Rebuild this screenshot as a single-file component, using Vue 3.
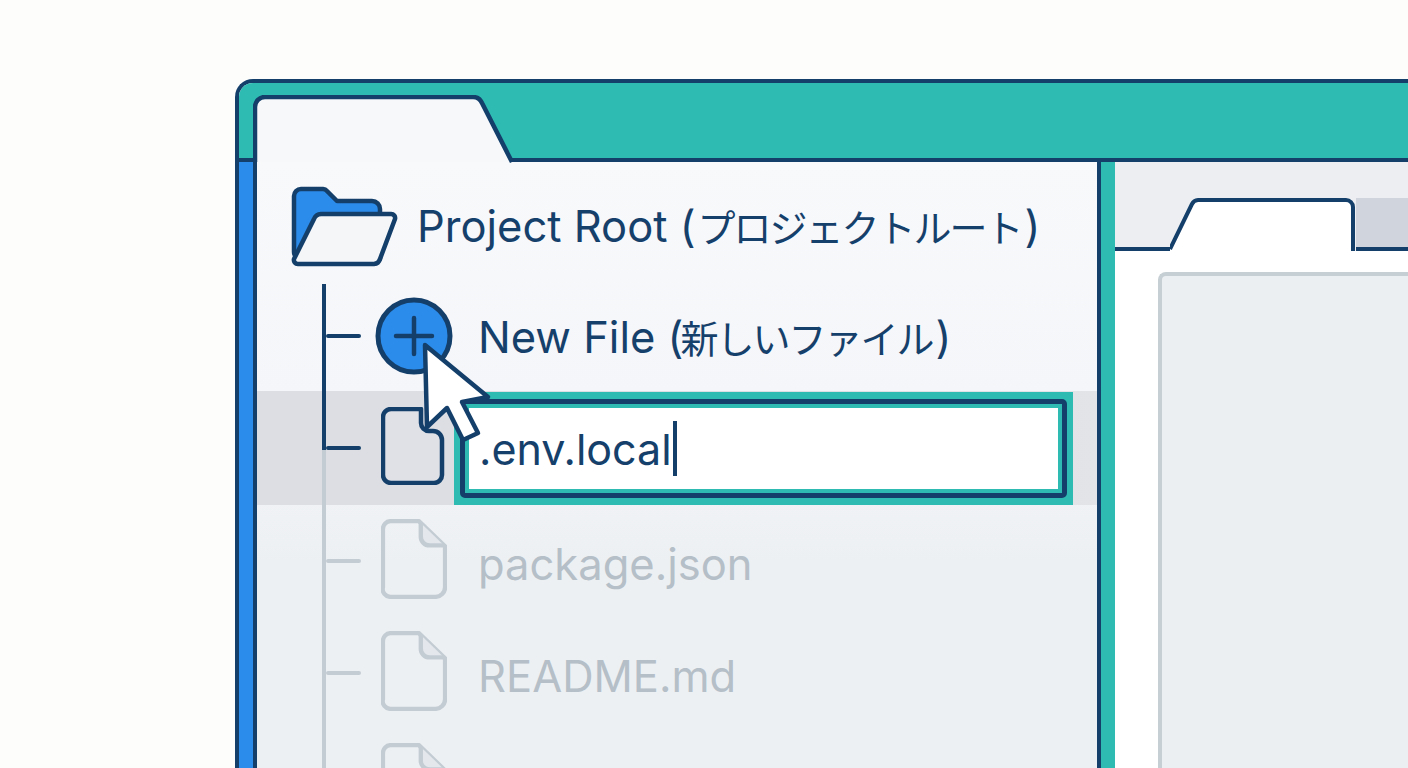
<template>
  <div class="page">
    <div class="window">
      <div class="titlebar">
        <svg class="folder-tab" viewBox="253 95 262 68" width="262" height="68">
          <path d="M255 162V107a10 10 0 0 1 10-10H473a10 10 0 0 1 9 6L512 162" fill="#f7f8fa" stroke="#143f6b" stroke-width="4.5" />
        </svg>
      </div>
      <div class="body">
        <div class="rail"></div>
        <aside class="explorer">
          <div class="root">
            <svg class="folder" viewBox="290 185 108 84" width="108" height="84">
              <path d="M294 196a7 7 0 0 1 7-7h22a6 6 0 0 1 4 2l10 10h35a8 8 0 0 1 8 8v50H301a7 7 0 0 1-7-7z" fill="#2b8ceb" stroke="#143f6b" stroke-width="4.5" stroke-linejoin="round" />
              <path d="M298 264a4 4 0 0 1-4-5l20-40a8 8 0 0 1 7-5h70a4 4 0 0 1 4 5l-15 40a7 7 0 0 1-6 5z" fill="#f4f6f8" stroke="#143f6b" stroke-width="4.5" stroke-linejoin="round" />
            </svg>
            <span class="label">Project Root (<span class="ja">プロジェクトルート</span>)</span>
          </div>
          <div class="row new-file">
            <span class="branch"></span>
            <svg class="plus" viewBox="0 0 80 80" width="80" height="80">
              <circle cx="40" cy="40" r="36" fill="#2b8ceb" stroke="#143f6b" stroke-width="5" />
              <path d="M40 22v36M22 40h36" stroke="#143f6b" stroke-width="4.5" stroke-linecap="round" />
            </svg>
            <span class="label">New File (<span class="ja">新しいファイル</span>)</span>
          </div>
          <div class="row editing">
            <span class="branch"></span>
            <svg class="file" viewBox="0 0 66 78" width="66" height="78">
              <path d="M10 2H40V16a8 8 0 0 0 8 8H52a9 9 0 0 1 9 9V68a8 8 0 0 1-8 8H10a8 8 0 0 1-8-8V10a8 8 0 0 1 8-8z" fill="#dfe1e6" stroke="#143f6b" stroke-width="4.5" stroke-linejoin="round" />
            </svg>
            <div class="input">
              <div class="input-inner">
                <span class="label">.env.local</span><span class="caret"></span>
              </div>
            </div>
          </div>
          <div v-for="name in dimFiles" :key="name" class="row dim">
            <span class="branch"></span>
            <svg class="file" viewBox="0 0 68 82" width="66" height="80">
              <path d="M10 2H39L66 28V70a10 10 0 0 1-10 10H10A8 8 0 0 1 2 70V10a8 8 0 0 1 8-8z" fill="none" stroke="#c3ccd3" stroke-width="4.5" stroke-linejoin="round" />
              <path d="M41 4V18a9 9 0 0 0 9 9H65" fill="#e4e8ec" stroke="#c3ccd3" stroke-width="4.5" />
            </svg>
            <span class="label">{{ name }}</span>
          </div>
        </aside>
        <div class="divider"></div>
        <main class="editor">
          <div class="tabs">
            <div class="tab-line"></div>
            <svg class="active-tab" viewBox="0 0 186 53" width="186" height="53">
              <path d="M0 53V51L22 6a7 7 0 0 1 6-4H176a7 7 0 0 1 7 7V53z" fill="#ffffff" />
              <path d="M0 51L22 6a7 7 0 0 1 6-4H176a7 7 0 0 1 7 7V53" fill="none" stroke="#143f6b" stroke-width="4" />
            </svg>
            <div class="other-tab"></div>
          </div>
          <div class="content">
            <div class="card"></div>
          </div>
        </main>
      </div>
    </div>
    <svg class="cursor" viewBox="0 0 80 110" width="80" height="110">
      <path d="M5 5L68 57L42 62L58 93L43 100L27 68L7 87z" fill="#ffffff" stroke="#143f6b" stroke-width="4.5" stroke-linejoin="round" />
    </svg>
  </div>
</template>

<script setup>
const dimFiles = ['package.json', 'README.md', '']
</script>

<style>
html,
body {
  margin: 0;
  overflow: hidden;
}
</style>

<style scoped>
.page {
  position: relative;
  box-sizing: border-box;
  height: 768px;
  padding: 79px 0 0 235px;
  overflow: hidden;
  background: #fdfdfc;
  font-family: Inter, 'Noto Sans CJK JP', sans-serif;
}
.window {
  box-sizing: border-box;
  width: 1300px;
  height: 800px;
  border: 4px solid #143f6b;
  border-right: 0;
  border-radius: 18px 0 0 0;
  overflow: hidden;
}
.titlebar {
  position: relative;
  box-sizing: border-box;
  height: 79px;
  background: #2dbbb2;
  border-bottom: 4px solid #143f6b;
}
.folder-tab {
  position: absolute;
  left: 14px;
  top: 12px;
}
.body {
  display: flex;
  height: 720px;
}
.rail {
  flex: none;
  width: 14px;
  background: #2b8ceb;
  border-right: 4px solid #143f6b;
}
.explorer {
  flex: none;
  width: 840px;
  background: linear-gradient(#f8f9fb 0, #f5f6f9 230px, #edf0f3 400px);
}
.divider {
  flex: none;
  width: 14px;
  background: #2dbbb2;
  border-left: 4px solid #143f6b;
}
.root {
  display: flex;
  align-items: center;
  height: 84px;
  padding: 23px 0 12px 33px;
}
.root .label {
  margin: -2px 0 0 19px;
}
.label {
  font-size: 43.5px;
  line-height: 1.2;
  color: #15406b;
  white-space: nowrap;
}
.ja {
  margin: 0 3px 0 2px;
  font-size: 38px;
  letter-spacing: -2px;
}
.row {
  display: flex;
  align-items: center;
  height: 112px;
  padding-left: 65px;
}
.branch {
  position: relative;
  flex: none;
  align-self: stretch;
  width: 54px;
  border-left: 4px solid #143f6b;
}
.branch::after {
  content: '';
  position: absolute;
  left: 0;
  top: calc(50% - 2px);
  width: 35px;
  height: 4px;
  border-radius: 2px;
  background: #143f6b;
}
.new-file {
  height: 110px;
}
.new-file .branch {
  margin-top: 3px;
}
.new-file .branch::after {
  top: calc(50% - 4px);
}
.new-file .plus {
  margin-left: -6px;
}
.new-file .label {
  margin: 2px 0 0 24px;
}
.new-file .ja {
  margin-left: -3px;
}
.editing {
  height: 114px;
  background: linear-gradient(90deg, #dcdee3, #dcdee3 60%, #e3e4e8);
}
.editing .branch {
  border-left-color: #c3ccd3;
}
.editing .branch::before {
  content: '';
  position: absolute;
  left: -4px;
  top: 0;
  width: 4px;
  height: 52%;
  background: #143f6b;
}
.file {
  flex: none;
  margin-left: 1px;
}
.editing .file {
  margin-bottom: 4px;
}
.input {
  box-sizing: border-box;
  flex: none;
  width: 619px;
  height: 113px;
  margin-left: 7px;
  padding: 7px 6px;
  background: #2dbbb2;
}
.input-inner {
  display: flex;
  align-items: center;
  box-sizing: border-box;
  height: 100%;
  padding-left: 14px;
  border: 5px solid #143f6b;
  border-radius: 5px;
  background: #fff;
  box-shadow: inset 0 0 0 4px #2dbbb2;
}
.input-inner .label {
  margin-top: 4px;
  font-size: 43px;
}
.caret {
  width: 4px;
  height: 55px;
  margin-left: 1px;
  background: #143f6b;
}
.dim .branch {
  border-left-color: #c3ccd3;
}
.dim .branch::after {
  background: #c3ccd3;
}
.dim .file {
  margin-bottom: 5px;
}
.dim .label {
  margin: 7px 0 0 31px;
  color: #b5bfc7;
}
.editor {
  flex: 1;
  display: flex;
  flex-direction: column;
  min-width: 0;
}
.tabs {
  display: flex;
  align-items: flex-end;
  flex: none;
  height: 89px;
  background: #eceef1;
}
.tab-line {
  flex: none;
  width: 55px;
  height: 4px;
  background: #143f6b;
}
.active-tab {
  flex: none;
  display: block;
}
.other-tab {
  flex: 1;
  box-sizing: border-box;
  height: 53px;
  background: #d0d5dd;
  border-bottom: 4px solid #143f6b;
}
.content {
  flex: 1;
  padding: 21px 0 0 43px;
  background: #fff;
}
.card {
  box-sizing: border-box;
  height: 100%;
  border: 4px solid #c6cfd3;
  border-right: 0;
  border-bottom: 0;
  border-radius: 8px 0 0 0;
  background: #eceff2;
}
.cursor {
  position: absolute;
  left: 420px;
  top: 340px;
}
</style>
